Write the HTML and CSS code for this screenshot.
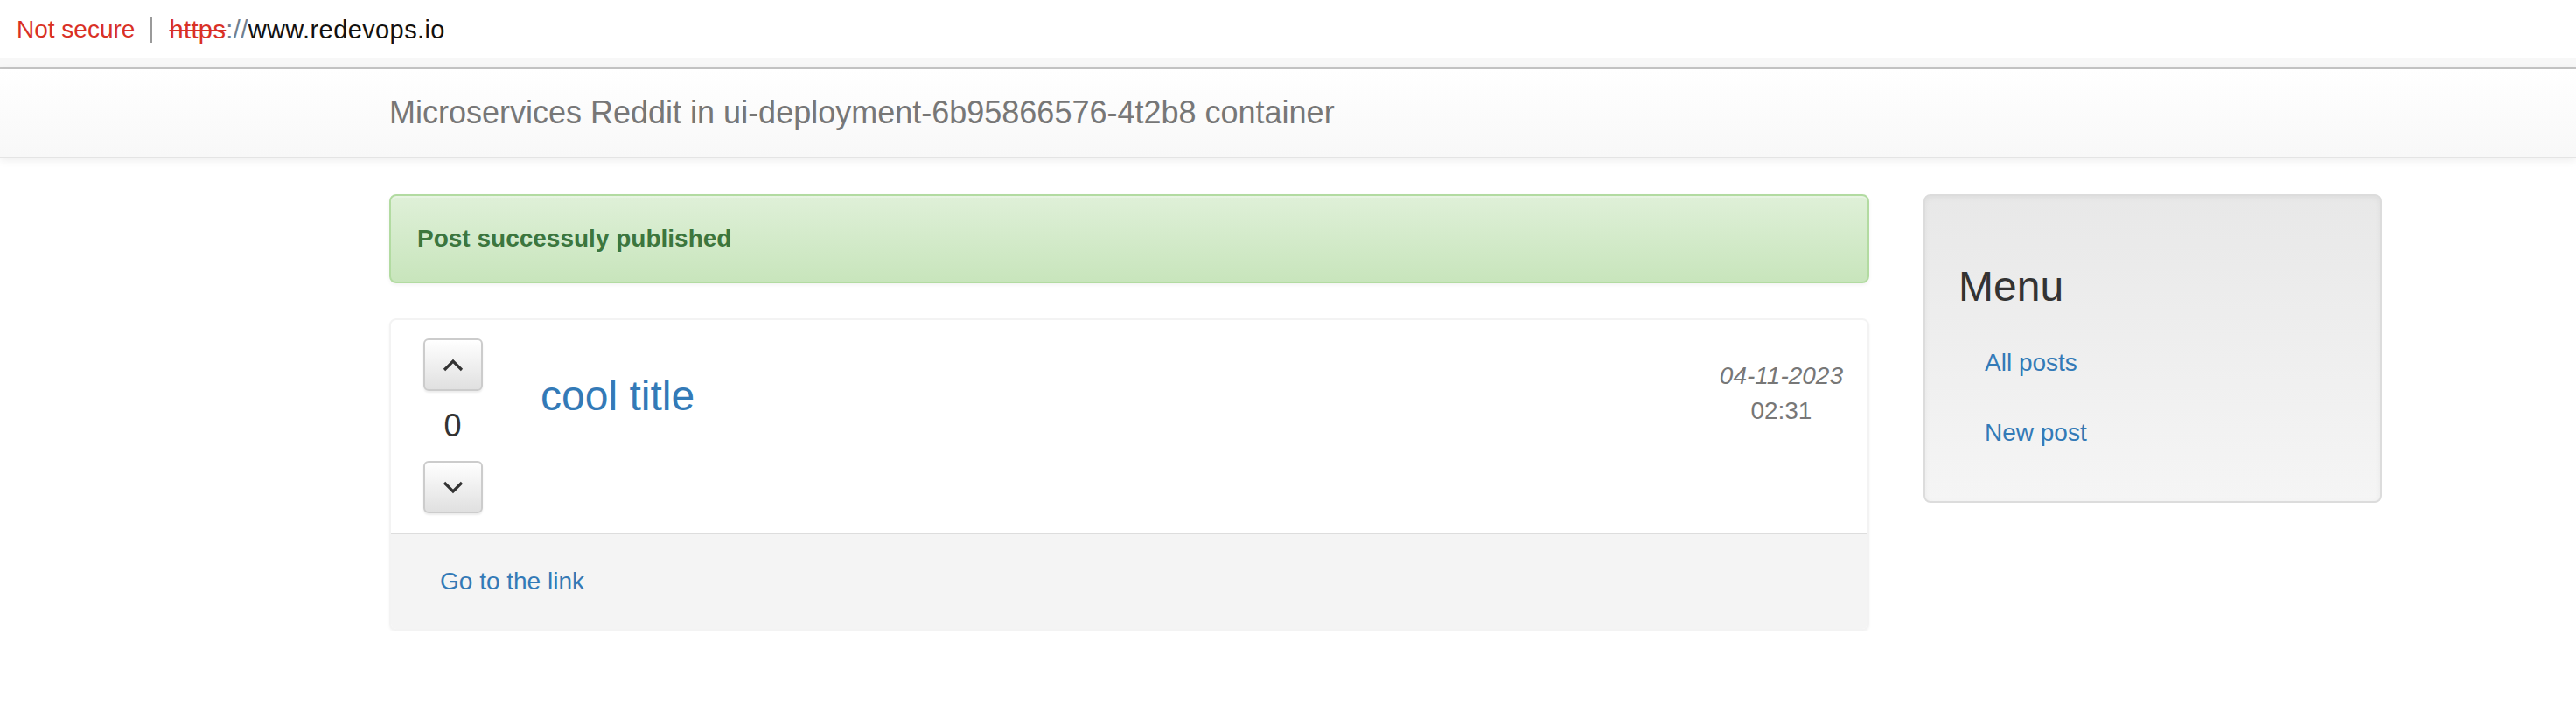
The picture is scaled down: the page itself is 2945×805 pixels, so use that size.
FILE: index.html
```html
<!DOCTYPE html>
<html lang="en">
<head>
<meta charset="utf-8">
<title>Microservices Reddit</title>
<link rel="stylesheet" href="styles.css">
</head>
<body>
<div class="urlbar">
  <span class="insecure">Not secure</span>
  <span class="sep"></span>
  <span class="url"><span class="scheme">https</span><span class="slashes">://</span>www.redevops.io</span>
</div>
<nav class="navbar">
  <div class="container">
    <a class="brand" href="#">Microservices Reddit in ui-deployment-6b95866576-4t2b8 container</a>
  </div>
</nav>
<div class="container">
  <div class="row">
    <main class="main">
      <div class="alert"><strong>Post successuly published</strong></div>
      <div class="panel">
        <div class="panel-body">
          <div class="vote">
            <button class="btn" type="button" aria-label="Upvote">
              <svg width="24" height="15" viewBox="0 0 24 15"><polyline points="2,13 12,3 22,13" fill="none" stroke="#333" stroke-width="3.2"/></svg>
            </button>
            <div class="count">0</div>
            <button class="btn" type="button" aria-label="Downvote">
              <svg width="24" height="15" viewBox="0 0 24 15"><polyline points="2,2 12,12 22,2" fill="none" stroke="#333" stroke-width="3.2"/></svg>
            </button>
          </div>
          <h3 class="title"><a href="#">cool title</a></h3>
          <div class="date"><em>04-11-2023</em><br>02:31</div>
        </div>
        <div class="panel-footer"><a href="#">Go to the link</a></div>
      </div>
    </main>
    <aside class="well">
      <h3 class="menu-title">Menu</h3>
      <ul class="nav">
        <li><a href="#">All posts</a></li>
        <li><a href="#">New post</a></li>
      </ul>
    </aside>
  </div>
</div>
</body>
</html>
```

FILE: styles.css
```css
* { box-sizing: border-box; }
html, body { margin: 0; padding: 0; background: #fff; }
body {
  font-family: "Liberation Sans", Arial, Helvetica, sans-serif;
  font-size: 28px;
  line-height: 40px;
  color: #333;
}
a { color: #337ab7; text-decoration: none; }

.urlbar {
  height: 79px;
  display: flex;
  align-items: center;
  padding: 0 0 10px 19px;
  background: linear-gradient(to bottom, #fff 0, #fff 86%, #f7f7f7 86%, #f7f7f7 100%);
  border-bottom: 2px solid #c6c6c6;
  font-size: 28px;
  line-height: 34px;
}
.insecure { color: #d93025; }
.sep {
  width: 2px;
  height: 30px;
  background: #9a9a9a;
  margin: 0 19px 0 18px;
}
.url { color: #111; font-size: 29px; letter-spacing: 0.4px; }
.scheme { color: #d93025; text-decoration: line-through; }
.slashes { color: #6f7f8f; }

.navbar {
  height: 102px;
  background: linear-gradient(to bottom, #fff 0, #f8f8f8 100%);
  border-bottom: 2px solid #e4e4e4;
  box-shadow: 0 2px 10px rgba(0, 0, 0, 0.075);
}
.container {
  width: 2340px;
  margin-left: 415px;
  padding: 0 30px;
}
.brand {
  display: block;
  padding: 30px 0;
  font-size: 36px;
  line-height: 40px;
  color: #777;
}

.row {
  display: flex;
  align-items: flex-start;
  gap: 62px;
  margin-top: 41px;
}
.main { width: 1692px; }

.alert {
  padding: 29px 30px;
  border: 2px solid #b2dba1;
  border-radius: 8px;
  background: linear-gradient(to bottom, #dff0d8 0, #c8e5bc 100%);
  color: #3c763d;
  text-shadow: 0 1px 0 rgba(255, 255, 255, 0.2);
  box-shadow: inset 0 2px 0 rgba(255, 255, 255, 0.25), 0 2px 4px rgba(0, 0, 0, 0.05);
  margin-bottom: 40px;
}

.panel {
  border: 2px solid #f3f3f3;
  border-radius: 8px;
  box-shadow: 0 2px 3px rgba(0, 0, 0, 0.05);
  background: #fff;
  overflow: hidden;
}
.panel-body {
  display: flex;
  align-items: flex-start;
  padding: 21px 28px 22px 30px;
}
.vote {
  width: 81px;
  display: flex;
  flex-direction: column;
  align-items: center;
}
.btn {
  width: 68px;
  height: 60px;
  padding: 0;
  display: flex;
  align-items: center;
  justify-content: center;
  border: 2px solid #ccc;
  border-radius: 6px;
  background: linear-gradient(to bottom, #fff 0, #e0e0e0 100%);
  box-shadow: inset 0 2px 0 rgba(255, 255, 255, 0.15), 0 2px 2px rgba(0, 0, 0, 0.075);
}
.count {
  margin: 20px 0;
  font-size: 36px;
  line-height: 40px;
  color: #333;
}
.title {
  margin: 40px 0 0 60px;
  font-size: 48px;
  line-height: 52.8px;
  font-weight: 500;
}
.date {
  margin: 23px 0 0 auto;
  text-align: center;
  color: #777;
}
.panel-footer {
  border-top: 2px solid #ddd;
  background: #f4f4f4;
  padding: 34px 56px;
  line-height: 40px;
}

.well {
  width: 524px;
  padding: 38px;
  border: 2px solid #dcdcdc;
  border-radius: 8px;
  background: linear-gradient(to bottom, #e8e8e8 0, #f5f5f5 100%);
  box-shadow: inset 0 2px 6px rgba(0, 0, 0, 0.05), 0 2px 0 rgba(255, 255, 255, 0.1);
}
.menu-title {
  margin: 40px 0 20px;
  font-size: 48px;
  line-height: 52.8px;
  font-weight: 500;
  color: #333;
}
.nav {
  list-style: none;
  margin: 0;
  padding: 0;
}
.nav a {
  display: block;
  padding: 20px 30px;
  line-height: 40px;
}
```
